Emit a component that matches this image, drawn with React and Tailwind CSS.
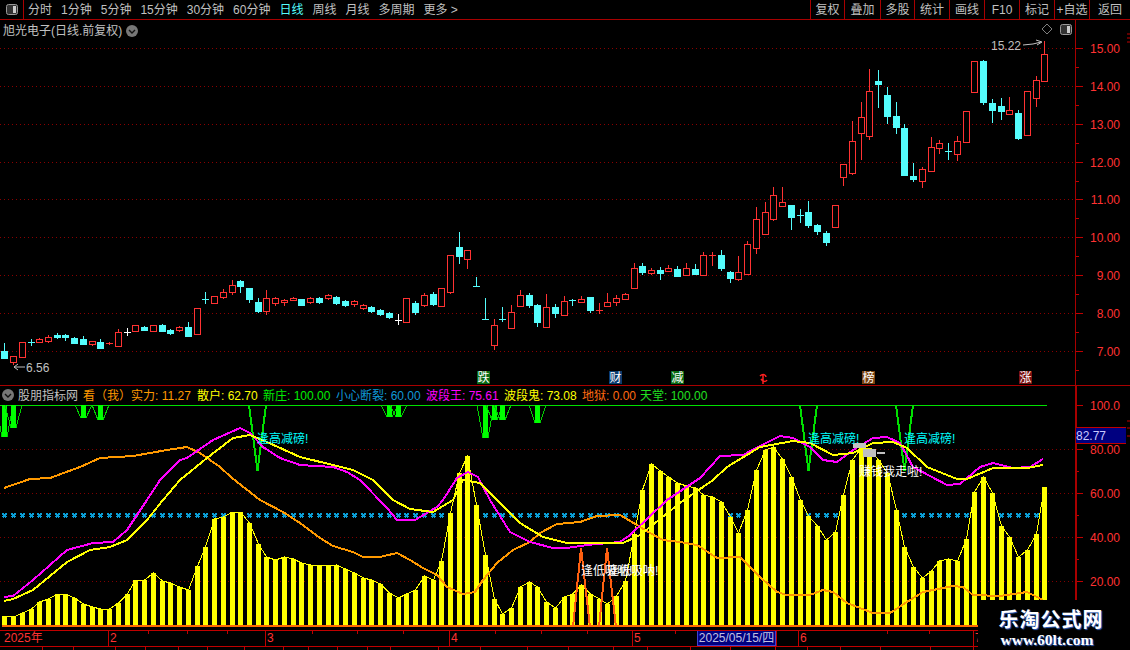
import React from "react";

// [type, high, bodyTop, bodyBottom, low] in page pixels, r = red, c = cyan, w = white
const candles = [
  ["c",343,351,358,358],["r",356,356,362,365],["r",342,342,357,357],["c",339,342.5,342.5,346],
  ["r",338,339,342,343],["r",335,337,341,343],["c",333,335,337,339],["c",334,335,337,341],
  ["c",337,338,343,344],["c",336,339,344,344],["r",341,341,344,346],["c",339,342,348,348],
  ["r",342,343,343,345],["r",329,332,346,346],["w",328,332,332,336],["r",325,325,331,331],
  ["c",326,327,330,331],["r",325,325,331,331],["c",324,325,331,331],["c",329,330,333,335],
  ["r",326,327,330,332],["c",322,327,336,337],["r",308,308,334,334],["c",292,299.5,299.5,304],
  ["r",296,296,303,304],["r",289,292,297,299],["r",280,285,292,295],["c",280,281,286,293],
  ["c",288,288,299,303],["c",298,302,311,313],["r",290,298,311,315],["r",297,298,303,306],
  ["r",299,300,302,306],["r",297,298,300,301],["c",299,299,305,305],["r",297,298,302,304],
  ["c",297,298,302,304],["r",294,295,298,300],["c",296,297,303,305],["c",300,301,305,307],
  ["r",300,301,304,307],["r",304,305,308,310],["c",306,307,311,313],["c",309,310,314,316],
  ["c",312,313,317,319],["w",314,320,320,325],["r",298,298,322,323],["c",301,303,312,315],
  ["r",293,295,305,307],["c",292,294,304,306],["r",288,288,306,306],["r",255,255,292,294],
  ["c",232,247,256,264],["r",250,250,259,269],["c",277,286,286,286],["c",298,319,319,319],
  ["r",319,325,345,350],["c",307,319.5,319.5,322],["r",305,312,328,329],["r",290,295,306,307],
  ["c",293,295,305,308],["c",304,305,322,327],["r",294,307,327,327],["c",304,307,313,318],
  ["r",296,301,315,315],["c",299,300.5,300.5,306],["r",296,299,302,302],["c",297,297,310,313],
  ["r",303,310,310,314],["r",293,302,306,306],["r",295,298,302,306],["r",293,294,299,299],
  ["r",263,268,288,288],["c",263,266,272,275],["r",268,270,273,275],["c",267,270,273,280],
  ["r",265,268,271,272],["c",266,269,276,277],["r",263,268,275,275],["c",264,269,274,275],
  ["r",252,255,275,275],["r",252,255,255,266],["c",250,255,268,271],["c",271,272,278,283],
  ["r",256,272,279,281],["r",241,244,274,274],["r",207,219,248,254],["r",202,212,234,234],
  ["r",187,195,219,221],["r",187,202,206,206],["c",205,205,217,230],["c",209,215.5,215.5,223],
  ["c",201,212,225,228],["c",224,225,231,235],["c",231,233,242,246],["r",205,205,227,227],
  ["r",164,164,177,186],["r",121,141,173,175],["r",102,117,133,160],["r",69,91,136,140],
  ["c",70,81,84,108],["c",87,95,116,124],["c",102,116,127,134],["c",124,128,175,176],
  ["c",163,176,179,182],["r",167,169,181,188],["r",137,147,171,171],["r",140,143,148,154],
  ["c",143,151.5,151.5,160],["r",136,141,154,161],["r",111,111,142,143],["r",61,61,92,93],
  ["c",60,61,102,105],["c",99,103,110,123],["c",98,106,111,120],["r",97,110,114,114],
  ["c",110,113,138,140],["r",91,91,135,135],["r",76,80,98,107],["r",41,54,81,81],
];

// top of each yellow column
const barTops = [
  616,617,613,609,602,599,594,594,598,604,607,609,609,603,594,580,580,573,581,583,
  587,590,566,547,519,517,512,512,523,544,557,560,557,559,563,565,565,566,565,569,
  573,578,580,584,593,598,594,590,576,580,561,513,473,456,505,555,599,614,608,587,
  582,587,602,608,597,594,585,594,599,604,596,581,534,490,464,471,477,483,486,488,
  495,497,502,517,533,510,470,450,447,459,477,500,516,526,540,532,495,460,448,448,
  460,473,510,547,567,578,571,561,559,561,539,492,477,493,526,537,557,550,534,487,
];

const orangePts = "4,488 30,479 50,478 80,467 100,458 133,456 167,450 187,447 200,453 220,467 232,478 260,500 283,512 300,523 320,538 333,546 353,552 363,557 380,557 397,553 410,560 423,568 437,575 447,587 463,594 475,592 483,580 497,563 513,550 530,542 540,533 557,524 580,522 597,516 620,515 637,525 650,533 663,540 680,542 697,545 717,558 740,557 760,577 777,592 787,595 810,595 823,590 833,592 847,603 873,613 890,613 907,602 923,592 953,586 963,587 973,595 1000,596 1027,592 1043,600";
const magentaPts = "4,597 13,596 33,580 67,550 93,543 113,542 127,530 147,500 160,480 180,460 187,458 213,440 240,428 250,433 263,447 280,458 300,465 333,467 347,472 360,480 387,508 397,520 415,520 437,507 443,500 457,478 468,472 478,477 490,500 510,532 530,542 553,548 567,548 587,545 620,542 630,535 667,500 700,478 720,456 743,455 760,446 780,436 793,438 810,447 823,460 837,462 853,450 873,438 887,437 900,443 913,467 947,485 960,484 980,467 993,463 1013,468 1030,467 1043,459";
const yellowPts = "4,601 13,599 33,590 67,562 90,550 110,547 127,540 147,520 163,500 180,480 207,458 233,438 250,435 267,442 300,457 333,465 353,470 373,480 393,500 410,509 433,512 453,500 463,480 480,483 497,500 520,523 543,537 567,543 623,543 640,535 680,503 713,480 727,467 760,447 793,441 810,443 833,455 853,453 873,443 893,442 907,448 927,467 957,479 967,479 993,468 1027,468 1043,465";

const greenBars = [[0,437],[1,428],[9,418],[11,420],[44,417],[45,417],[55,438],[56,420],[57,420],[61,423]];
const spikes = [249,800,896];
const priceTicks = [["15.00",48],["14.00",86],["13.00",124],["12.00",162],["11.00",199.5],["10.00",237.5],["9.00",275],["8.00",313],["7.00",351]];
const indexTicks = [["100.0",405],["80.00",449],["60.00",493],["40.00",537],["20.00",581]];
const legend = [
  [83, "看（我）实力: 11.27", "text-[#ff9900]"],
  [197, "散户: 62.70", "text-[#ffff00]"],
  [263, "新庄: 100.00", "text-[#00ee00]"],
  [336, "小心断裂: 60.00", "text-[#1098d8]"],
  [426, "波段王: 75.61", "text-[#ff00ff]"],
  [504, "波段鬼: 73.08", "text-[#ffff00]"],
  [582, "地狱: 0.00", "text-[#ff6a10]"],
  [640, "天堂: 100.00", "text-[#20e020]"],
];
const signs = [
  [477, "跌", "#0a6a14"],
  [609, "财", "#0a3c6e"],
  [671, "减", "#0a6a14"],
  [862, "榜", "#7a4210"],
  [1019, "涨", "#7a1010"],
];
const leftItems = ["分时","1分钟","5分钟","15分钟","30分钟","60分钟","日线","周线","月线","多周期","更多 >"];
const rightItems = [["复权","w-[34px]"],["叠加","w-[36px]"],["多股","w-[34px]"],["统计","w-[35px]"],["画线","w-[35px]"],["F10","w-[35px]"],["标记","w-[35px]"],["+自选","w-[35px]"],["返回","w-[41px]"]];
const dateTicks = [148,187,227,312,357,403,495,541,587,675,887,929];
const lowerTicks = [42,73,115,145,178,207,244,283,308,337,367,390,438,480,527,568,613,647,690,730,775,807,840,880,930,973];

const xAt = (i) => Math.round(4.3 + 8.739 * i);

const PanelIcon = () => (
  <svg width="12" height="11" viewBox="0 0 12 11">
    <rect x="0.5" y="0.5" width="11" height="10" rx="2" fill="#333" stroke="#999" />
    <rect x="7" y="2" width="3" height="7" fill="#ccc" />
  </svg>
);

const RoundChevron = () => (
  <svg width="12" height="12" viewBox="0 0 12 12">
    <circle cx="6" cy="6" r="6" fill="#777" />
    <path d="M3 5l3 3 3-3" fill="none" stroke="#111" strokeWidth="1.4" />
  </svg>
);

const Candle = ({ c, i }) => {
  const [type, high, top, bottom, low] = c;
  const x = xAt(i);
  const color = type === "r" ? "#ff3232" : type === "c" ? "#54fcfc" : "#ffffff";
  const flat = top === bottom;
  return (
    <g stroke={color} fill={type === "c" ? color : "#000"}>
      <line x1={x + 0.5} x2={x + 0.5} y1={high} y2={low} />
      {flat ? (
        <line x1={x - 3} x2={x + 4} y1={Math.floor(top) + 0.5} y2={Math.floor(top) + 0.5} strokeWidth="1.5" />
      ) : (
        <rect x={x - 3 + 0.5} y={Math.round(top) + 0.5} width="6" height={Math.round(bottom - top)} />
      )}
    </g>
  );
};

const App = () => {
  return (
    <div className="relative flex h-[650px] w-[1130px] flex-col overflow-hidden bg-black font-['Liberation_Sans','Noto_Sans_CJK_SC',sans-serif] text-[12px] text-[#c0c0c0]">
      {/* toolbar */}
      <div className="flex h-[20px] shrink-0 items-center border-b border-[#a80000]">
        <div className="flex h-full w-[24px] items-center justify-center border-r border-[#a80000]">
          <PanelIcon />
        </div>
        <div className="ml-[4px] flex gap-[9px]">
          {leftItems.map((item) => (
            <span key={item} className={item === "日线" ? "text-[#54fcfc]" : ""}>
              {item}
            </span>
          ))}
        </div>
        <div className="ml-auto flex h-full">
          {rightItems.map(([label, w]) => (
            <div key={label} className={`flex items-center justify-center border-l border-[#a80000] ${w}`}>
              {label}
            </div>
          ))}
        </div>
      </div>

      {/* price pane */}
      <div className="relative h-[365px] shrink-0">
        <svg width="1130" height="365" viewBox="0 20 1130 365" className="block">
          {priceTicks.map(([label, y]) => (
            <g key={label}>
              <line x1="0" x2="1075" y1={Math.floor(y) + 0.5} y2={Math.floor(y) + 0.5} stroke="#8a0000" strokeDasharray="1 3" />
              <line x1="1075" x2="1083" y1={Math.floor(y) + 0.5} y2={Math.floor(y) + 0.5} stroke="#c00000" />
              <line x1="1075" x2="1079" y1={Math.floor(y) + 19.5} y2={Math.floor(y) + 19.5} stroke="#c00000" />
              <text x="1120" y={y + 4.5} textAnchor="end" fill="#ff3232">{label}</text>
            </g>
          ))}
          <line x1="1075.5" x2="1075.5" y1="20" y2="385" stroke="#a80000" />
          <path d="M1127 34h3M1127 38h3M1127 42h3" stroke="#c00000" />
          <g shapeRendering="crispEdges">
            {candles.map((c, i) => (
              <Candle key={i} c={c} i={i} />
            ))}
          </g>
          <text x="991" y="50" fill="#c0c0c0">15.22</text>
          <path d="M1023 45l10-1 8-2M1036 40l6 2-5 3" fill="none" stroke="#c0c0c0" />
          <text x="26" y="372" fill="#c0c0c0">6.56</text>
          <path d="M25 367H14M18 364l-4 3 4 3" fill="none" stroke="#c0c0c0" />
          <path d="M1047 24l5 5-5 5-5-5z" fill="none" stroke="#808080" />
          <path d="M760 376c3-3 6-1 6 1M761 379c2 3 5 3 6 1M763 374v10" fill="none" stroke="#ff2020" strokeWidth="1.5" />
          {signs.map(([x, label, bg]) => (
            <g key={label}>
              <rect x={x} y="371" width="13" height="13" fill={bg} />
              <text x={x + 0.5} y="382" fill="#fff">{label}</text>
            </g>
          ))}
        </svg>
        {/* title sits over the chart */}
        <div className="absolute left-[3px] top-[2px] flex items-center gap-[4px]">
          <span>旭光电子(日线.前复权)</span>
          <RoundChevron />
        </div>
        <div className="absolute left-[1060px] top-[4px]">
          <PanelIcon />
        </div>
      </div>

      {/* indicator legend */}
      <div className="relative h-[20px] shrink-0 border-t border-[#a80000]">
        <div className="absolute left-[2px] top-[3px]">
          <RoundChevron />
        </div>
        <span className="absolute left-[18px] top-[1px]">股朋指标网</span>
        {legend.map(([x, text, color]) => (
          <span key={text} className={`absolute top-[1px] ${color}`} style={{ left: x }}>
            {text}
          </span>
        ))}
        <div className="absolute right-0 top-0 h-full w-[55px] border-l-2 border-[#a80000]" />
      </div>

      {/* indicator pane */}
      <div className="relative h-[225px] shrink-0">
        <svg width="1130" height="225" viewBox="0 405 1130 225" className="block overflow-visible">
          {indexTicks.map(([label, y]) => (
            <g key={label}>
              {y !== 405 && <line x1="0" x2="1075" y1={y + 0.5} y2={y + 0.5} stroke="#800000" strokeDasharray="1 3" />}
              <line x1="1075" x2="1083" y1={y + 0.5} y2={y + 0.5} stroke="#c00000" />
              <line x1="1075" x2="1079" y1={y + 22.5} y2={y + 22.5} stroke="#c00000" />
              <text x="1120" y={y + 5} textAnchor="end" fill="#ff3232">{label}</text>
            </g>
          ))}
          <line x1="1076" x2="1076" y1="405" y2="630" stroke="#a80000" strokeWidth="2" />
          <line x1="0" x2="1047" y1="405.5" y2="405.5" stroke="#00e000" />
          <path d="M1127 421h3M1127 428h3M1127 436h3" stroke="#c00000" />
          <g shapeRendering="crispEdges">
            {/* blue cross line */}
            {barTops.map((_, i) => (
              <path
                key={i}
                d={`M${xAt(i) - 1.5} 513.5l4 4M${xAt(i) + 2.5} 513.5l-4 4`}
                stroke="#0a9fd8"
                strokeWidth="2"
              />
            ))}
            {barTops.map((top, i) => (
              <rect key={i} x={xAt(i) - 2} y={top} width="5" height={627 - top} fill="#ffff00" />
            ))}
            <polyline
              points={barTops.map((top, i) => `${xAt(i) + 0.5},${top}`).join(" ")}
              fill="none"
              stroke="#ffff00"
            />
            <rect x="2" y="625" width="1073" height="2" fill="#ff6a00" />
            {greenBars.map(([i, bottom]) => (
              <g key={i}>
                <rect x={xAt(i) - 2} y="405" width="5" height={bottom - 405} fill="#00ff00" />
                <path d={`M${xAt(i) - 8} 405L${xAt(i) - 2} ${bottom}M${xAt(i) + 9} 405L${xAt(i) + 3} ${bottom}`} stroke="#00d000" fill="none" />
              </g>
            ))}
            {spikes.map((x) => (
              <polyline key={x} points={`${x},405 ${x + 8.5},471 ${x + 17},405`} fill="none" stroke="#00e000" strokeWidth="2" />
            ))}
            <polyline points="573,627 581,548 590,627" fill="none" stroke="#ff6010" strokeWidth="2" />
            <polyline points="599,627 607,548 616,627" fill="none" stroke="#ff6010" strokeWidth="2" />
            <polyline points={orangePts} fill="none" stroke="#ff9900" strokeWidth="2" />
            <polyline points={magentaPts} fill="none" stroke="#ff00ff" strokeWidth="2" />
            <polyline points={yellowPts} fill="none" stroke="#ffff00" strokeWidth="2" />
            <rect x="853" y="443" width="13" height="5" fill="#c0c0c0" />
            <rect x="863" y="449" width="13" height="8" fill="#c0c0c0" />
            <rect x="877" y="452" width="8" height="2" fill="#c0c0c0" />
          </g>
          {spikes.map((x) => (
            <text key={x} x={x + 8} y="443" fill="#00ffff">逢高减磅!</text>
          ))}
          <text x="859" y="476" fill="#fff">赚钱我走啦!</text>
          <text x="581" y="575" fill="#fff">逢低吸呐!</text>
          <text x="607" y="575" fill="#fff">逢低吸呐!</text>
        </svg>
        {/* current value tag */}
        <div className="absolute left-[1076px] top-[22px] flex h-[17px] w-[50px] items-center border-y border-[#c00000] bg-[#000080] text-[#c8c8ff]">
          82.77
        </div>
      </div>

      {/* date axis */}
      <div className="relative flex h-[16px] shrink-0 border-t border-[#c00000] text-[#ff3232]">
        <div className="w-[108px] pl-[4px] leading-[15px]">2025年</div>
        <div className="w-[157px] border-l border-[#c00000] pl-[1px] leading-[15px]">2</div>
        <div className="w-[184px] border-l border-[#c00000] pl-[1px] leading-[15px]">3</div>
        <div className="w-[183px] border-l border-[#c00000] pl-[1px] leading-[15px]">4</div>
        <div className="w-[65px] border-l border-[#c00000] pl-[1px] leading-[15px]">5</div>
        <div className="w-[79px] border border-t-0 border-[#4040d0] bg-[#000080] text-center leading-[15px] text-[#c0c0e0]">2025/05/15/四</div>
        <div className="w-[22px] border-l border-[#c00000]" />
        <div className="w-[175px] border-l border-[#c00000] pl-[1px] leading-[15px]">6</div>
        <div className="w-[157px] border-l border-[#c00000] pl-[1px] leading-[15px]">7</div>
        <svg width="978" height="4" className="absolute left-0 top-0">
          {dateTicks.map((x) => (
            <line key={x} x1={x + 0.5} x2={x + 0.5} y1="0" y2="3" stroke="#c00000" />
          ))}
        </svg>
      </div>
      <div className="relative h-[4px] shrink-0 border-t border-[#c00000]">
        <svg width="978" height="4" className="absolute left-0 top-0">
          {lowerTicks.map((x) => (
            <line key={x} x1={x + 0.5} x2={x + 0.5} y1="0" y2="4" stroke="#c00000" />
          ))}
        </svg>
      </div>

      {/* watermark laid over the corner */}
      <div className="absolute bottom-0 right-0 flex h-[50px] w-[152px] flex-col items-center bg-black pr-[6px] pt-[8px]">
        <span className="whitespace-nowrap text-[20px] font-bold leading-[24px] tracking-[1px] text-white [text-shadow:1px_1px_1px_#3060c0]">乐淘公式网</span>
        <span className="mr-[8px] whitespace-nowrap font-['Liberation_Serif',serif] text-[15.5px] font-bold leading-[16px] text-white [text-shadow:1px_1px_1px_#3060c0]">www.60lt.com</span>
      </div>
    </div>
  );
};

export default App;
